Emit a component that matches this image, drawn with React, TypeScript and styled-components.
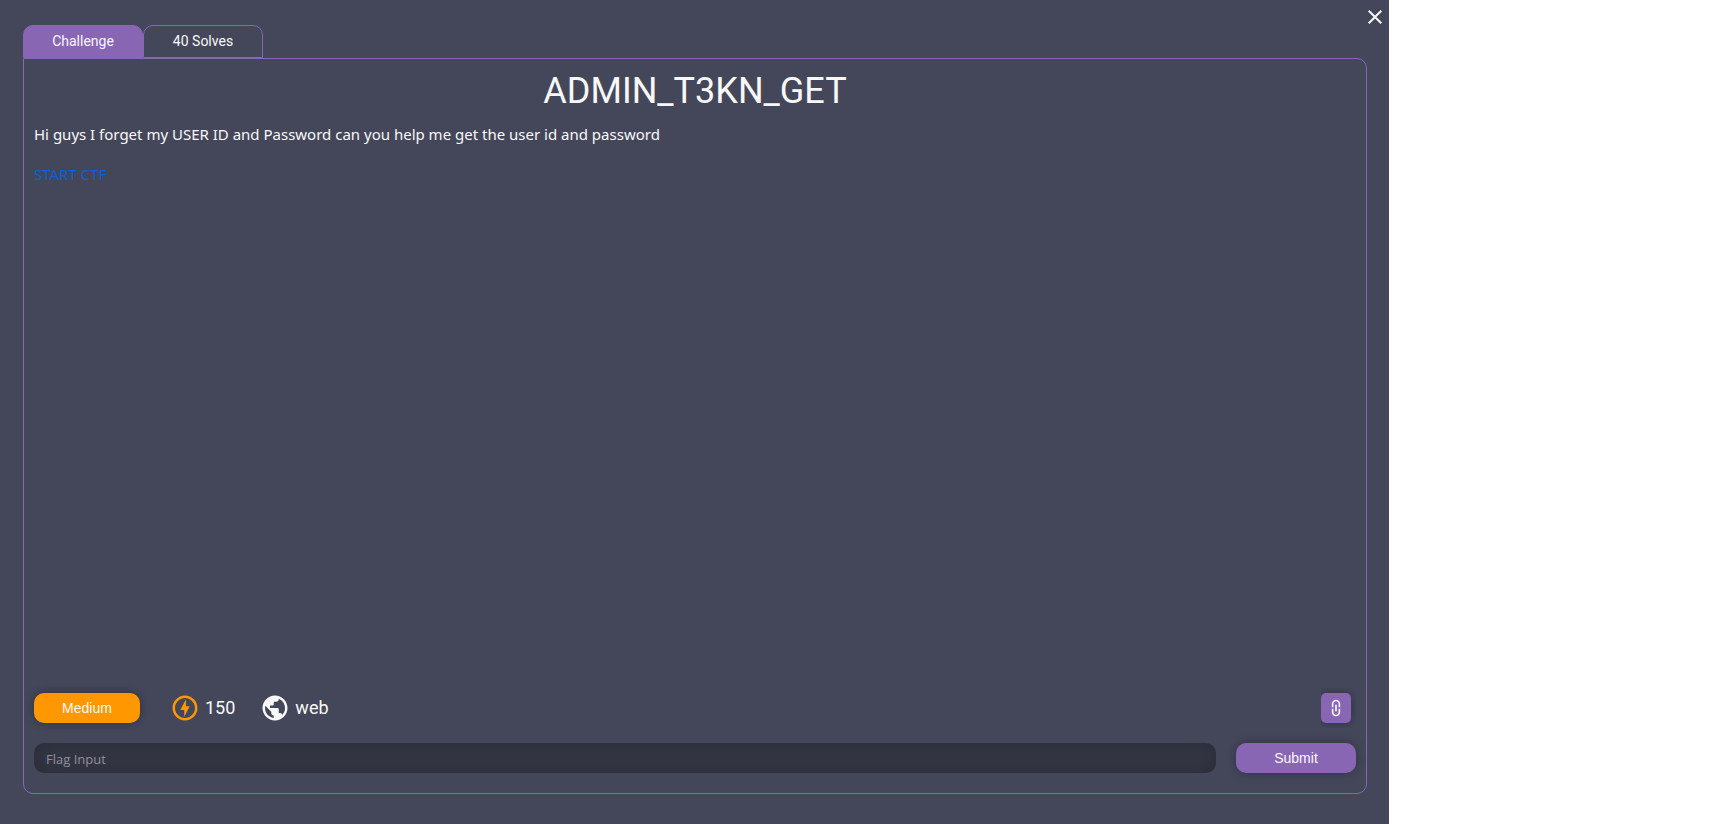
import React, { useState } from "react";
import styled, { createGlobalStyle } from "styled-components";
import { MdClose, MdLink, MdOutlineOfflineBolt, MdPublic } from "react-icons/md";

const GlobalStyle = createGlobalStyle`
  *, *::before, *::after { box-sizing: border-box; }
  body { margin: 0; background: #ffffff; }
`;

const purple = "#8966b4";
const ink = "#f8f8f8";

const Page = styled.div`
  display: flex;
  min-height: 100vh;
  padding-right: 332px;
  color: ${ink};
  font-family: Roboto, sans-serif;
`;

const Modal = styled.main`
  position: relative;
  display: flex;
  flex: 1;
  flex-direction: column;
  min-width: 0;
  padding: 25px 22px 30px 23px;
  background: #44475a;
`;

const CloseButton = styled.button`
  position: absolute;
  top: 5px;
  right: 2px;
  display: flex;
  padding: 0;
  border: 0;
  background: none;
  color: ${ink};
  cursor: pointer;
`;

const Tabs = styled.div`
  display: flex;
`;

const Tab = styled.button<{ $active: boolean }>`
  width: 120px;
  height: 33px;
  padding: 0 0 1px;
  border: 1px solid ${purple};
  border-radius: 10px 10px 0 0;
  background: ${(p) => (p.$active ? purple : "transparent")};
  color: ${ink};
  font: 400 14px Roboto, sans-serif;
  cursor: pointer;
`;

const Panel = styled.section`
  display: flex;
  flex: 1;
  flex-direction: column;
  padding: 10px 10px 20px;
  border: 1px solid ${purple};
  border-radius: 0 10px 10px 10px;
`;

const Title = styled.h1`
  margin: 0;
  font-size: 36px;
  font-weight: 400;
  line-height: 44px;
  text-align: center;
`;

const Description = styled.div`
  flex: 1;
  padding-top: 9px;
  font: 15px/24px "Noto Sans", sans-serif;

  p { margin: 0 0 16px; }
`;

const StartLink = styled.a`
  color: #0d5fd3;
  text-decoration: none;
`;

const MetaRow = styled.div`
  display: flex;
  align-items: center;
  margin-bottom: 15px;
`;

const Difficulty = styled.span`
  width: 106px;
  margin-right: 30px;
  border-radius: 10px;
  background: #ff9800;
  box-shadow: 0 0 10px rgba(0, 0, 0, 0.3);
  font: 14px/30px "Liberation Sans", Arial, sans-serif;
  text-align: center;
`;

const Stat = styled.span`
  display: flex;
  align-items: center;
  gap: 5px;
  margin-right: 25px;
  font-size: 18px;
  line-height: 28px;
`;

const LinkSlot = styled.div`
  margin-left: auto;
  padding: 5px 5px 5px 0;
  overflow: hidden;
`;

const LinkButton = styled.button`
  display: flex;
  align-items: center;
  justify-content: center;
  width: 30px;
  height: 30px;
  padding: 0;
  border: 0;
  border-radius: 5px;
  background: ${purple};
  box-shadow: 0 0 10px rgba(0, 0, 0, 0.3);
  color: ${ink};
  cursor: pointer;

  svg { transform: rotate(90deg); }
`;

const FlagForm = styled.form`
  display: flex;
  gap: 20px;
`;

const FlagInput = styled.input`
  flex: 1;
  min-width: 0;
  height: 30px;
  padding: 1px 12px 0;
  border: 0;
  border-radius: 10px;
  background: #343644;
  box-shadow: inset 0 0 20px rgba(0, 0, 0, 0.2);
  color: ${ink};
  font: 13px "Open Sans", sans-serif;

  &::placeholder { color: #8f909a; opacity: 1; }
`;

const SubmitButton = styled.button`
  width: 120px;
  height: 30px;
  border: 0;
  border-radius: 10px;
  background: ${purple};
  box-shadow: 0 0 10px rgba(0, 0, 0, 0.3);
  color: ${ink};
  font: 14px "Liberation Sans", Arial, sans-serif;
  cursor: pointer;
`;

export default function App() {
  const [tab, setTab] = useState("challenge");
  const [flag, setFlag] = useState("");

  return (
    <Page>
      <GlobalStyle />
      <Modal>
        <CloseButton aria-label="Close">
          <MdClose size={24} />
        </CloseButton>
        <Tabs role="tablist">
          <Tab role="tab" aria-selected={tab === "challenge"} $active={tab === "challenge"} onClick={() => setTab("challenge")}>
            Challenge
          </Tab>
          <Tab role="tab" aria-selected={tab === "solves"} $active={tab === "solves"} onClick={() => setTab("solves")}>
            40 Solves
          </Tab>
        </Tabs>
        <Panel>
          <Title>ADMIN_T3KN_GET</Title>
          <Description>
            <p>Hi guys I forget my USER ID and Password can you help me get the user id and password</p>
            <p>
              <StartLink href="#start">START CTF</StartLink>
            </p>
          </Description>
          <MetaRow>
            <Difficulty>Medium</Difficulty>
            <Stat>
              <MdOutlineOfflineBolt size={30} color="#ff9800" />
              150
            </Stat>
            <Stat>
              <MdPublic size={30} />
              web
            </Stat>
            <LinkSlot>
              <LinkButton aria-label="Copy link">
                <MdLink size={20} />
              </LinkButton>
            </LinkSlot>
          </MetaRow>
          <FlagForm onSubmit={(e) => e.preventDefault()}>
            <FlagInput
              aria-label="Flag Input"
              placeholder="Flag Input"
              value={flag}
              onChange={(e) => setFlag(e.target.value)}
            />
            <SubmitButton type="submit">Submit</SubmitButton>
          </FlagForm>
        </Panel>
      </Modal>
    </Page>
  );
}
